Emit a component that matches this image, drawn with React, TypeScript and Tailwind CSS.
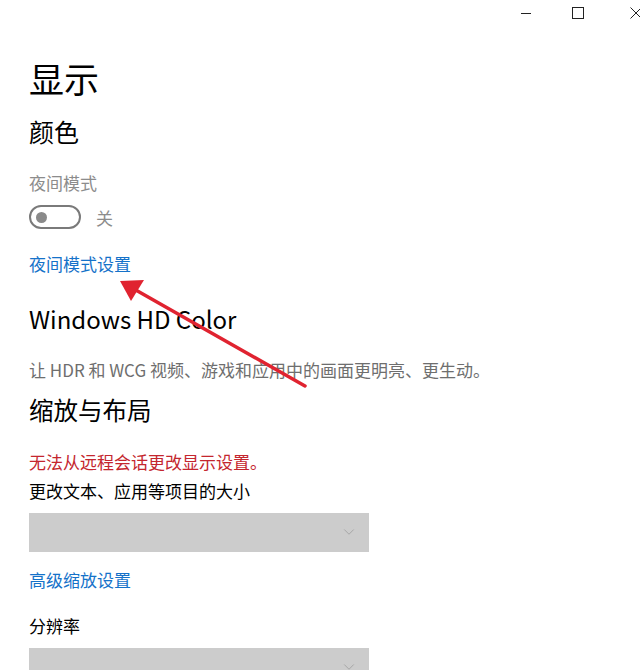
import { ChevronDown } from "lucide-react";

const cjk = "font-['Segoe_UI','Noto_Sans_CJK_SC',sans-serif]";

const Dropdown = () => (
  <div className="w-[340px] h-[39px] bg-[#cccccc] flex items-center justify-end pr-[11px]">
    <ChevronDown size={18} strokeWidth={1} className="text-[#9a9a9a]" />
  </div>
);

const App = () => {
  return (
    <div className={`relative w-[640px] h-[670px] overflow-hidden bg-white text-black ${cjk}`}>
      {/* window controls */}
      <div className="flex justify-end items-center h-[25px] -mr-[2px]">
        <svg width="10" height="10" viewBox="0 0 10 10">
          <line x1="0" y1="5.5" x2="10" y2="5.5" stroke="#222" strokeWidth="1" />
        </svg>
        <svg width="12" height="12" viewBox="0 0 12 12" className="ml-[41px]">
          <rect x="0.5" y="0.5" width="11" height="11" fill="none" stroke="#222" strokeWidth="1" />
        </svg>
        <svg width="12" height="12" viewBox="0 0 12 12" className="ml-[46px]">
          <path d="M0.5 0.5 L11.5 11.5 M11.5 0.5 L0.5 11.5" stroke="#222" strokeWidth="1" />
        </svg>
      </div>

      <div className="pl-[29px]">
        <h1 className="text-[35px] leading-none mt-[35px] font-normal">显示</h1>
        <h2 className="text-[25px] leading-none mt-[24px] font-normal">颜色</h2>

        <div className="text-[17px] leading-none mt-[30px] text-[#8c8c8c]">夜间模式</div>
        <div className="flex items-center gap-[15px] mt-[14px]">
          <div className="w-[52px] h-[24px] rounded-full border-2 border-[#7a7a7a] flex items-center pl-[5px]">
            <div className="w-[11px] h-[11px] rounded-full bg-[#8a8a8a]" />
          </div>
          <span className="text-[17px] leading-none text-[#8c8c8c]">关</span>
        </div>

        <a className="block text-[17px] leading-none mt-[26px] text-[#1572c9]">夜间模式设置</a>

        <h2 className="text-[24px] leading-none mt-[35px] font-normal">Windows HD Color</h2>
        <p className="text-[17px] leading-none mt-[30px] text-[#6e6e6e]">
          让 HDR 和 WCG 视频、游戏和应用中的画面更明亮、更生动。
        </p>

        <h2 className="text-[24.5px] leading-none mt-[20px] font-normal">缩放与布局</h2>

        <div className="text-[17px] leading-none mt-[30px] text-[#c4262e]">无法从远程会话更改显示设置。</div>
        <div className="text-[17px] leading-none mt-[12px]">更改文本、应用等项目的大小</div>
        <div className="mt-[14px]">
          <Dropdown />
        </div>
        <a className="block text-[17px] leading-none mt-[19px] text-[#1572c9]">高级缩放设置</a>
        <div className="text-[17px] leading-none mt-[29px]">分辨率</div>
        <div className="mt-[14px]">
          <Dropdown />
        </div>
      </div>

      {/* red annotation arrow */}
      <svg className="absolute inset-0 pointer-events-none" width="640" height="670">
        <line x1="305" y1="386" x2="134" y2="289" stroke="#e02330" strokeWidth="3.5" strokeLinecap="round" />
        <polygon points="120,281 144,280 131,301" fill="#e02330" />
      </svg>
    </div>
  );
};

export default App;
